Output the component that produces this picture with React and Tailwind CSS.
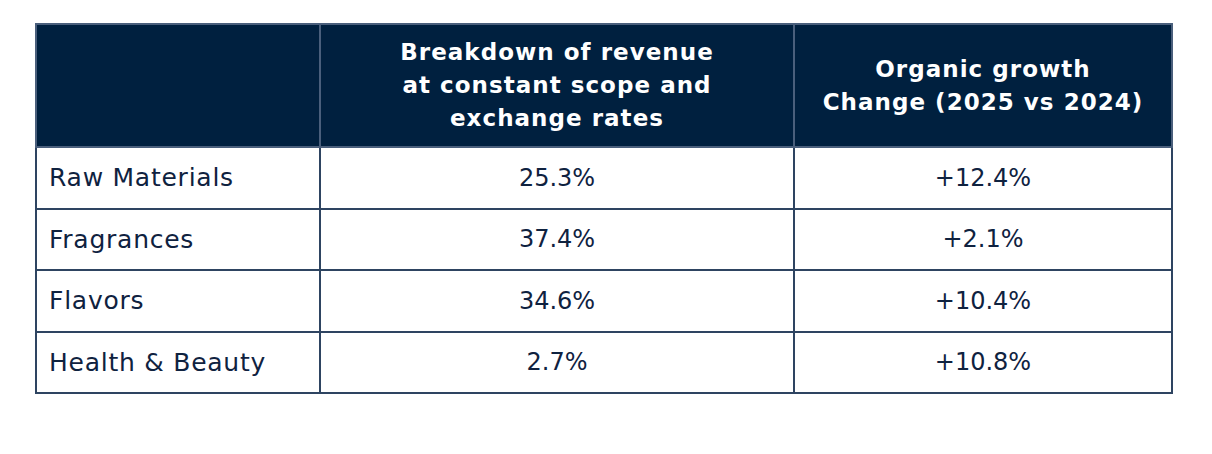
const HEAD = ["", "Breakdown of revenue\nat constant scope and\nexchange rates", "Organic growth\nChange (2025 vs 2024)"];

const ROWS = [
  ["Raw Materials", "25.3%", "+12.4%"],
  ["Fragrances", "37.4%", "+2.1%"],
  ["Flavors", "34.6%", "+10.4%"],
  ["Health & Beauty", "2.7%", "+10.8%"],
];

export default function App() {
  return (
    <div className="min-h-[454px] w-[1212px] bg-white pt-[23px] pl-[35px] font-['DejaVu_Sans',sans-serif]">
      <table className="w-[1136px] table-fixed border-collapse border-2 border-[#223753]">
        <colgroup>
          <col className="w-[284px]" />
          <col className="w-[474px]" />
          <col className="w-[378px]" />
        </colgroup>
        <thead>
          <tr className="h-[123px] bg-[#00203f]">
            {HEAD.map((h, i) => (
              <th
                key={i}
                className="whitespace-pre-line border-2 border-[#4a5f7c] px-1 text-center align-middle text-[23px] font-bold leading-[33px] tracking-[0.045em] text-white"
              >
                {h}
              </th>
            ))}
          </tr>
        </thead>
        <tbody>
          {ROWS.map((r) => (
            <tr key={r[0]} className="h-[61.5px]">
              <td className="border-2 border-[#2e4461] pl-[12px] text-[25px] tracking-[0.03em] text-[#0f223f]">{r[0]}</td>
              <td className="border-2 border-[#2e4461] text-center text-[24px] text-[#0f223f]">{r[1]}</td>
              <td className="border-2 border-[#2e4461] text-center text-[24px] text-[#0f223f]">{r[2]}</td>
            </tr>
          ))}
        </tbody>
      </table>
    </div>
  );
}
